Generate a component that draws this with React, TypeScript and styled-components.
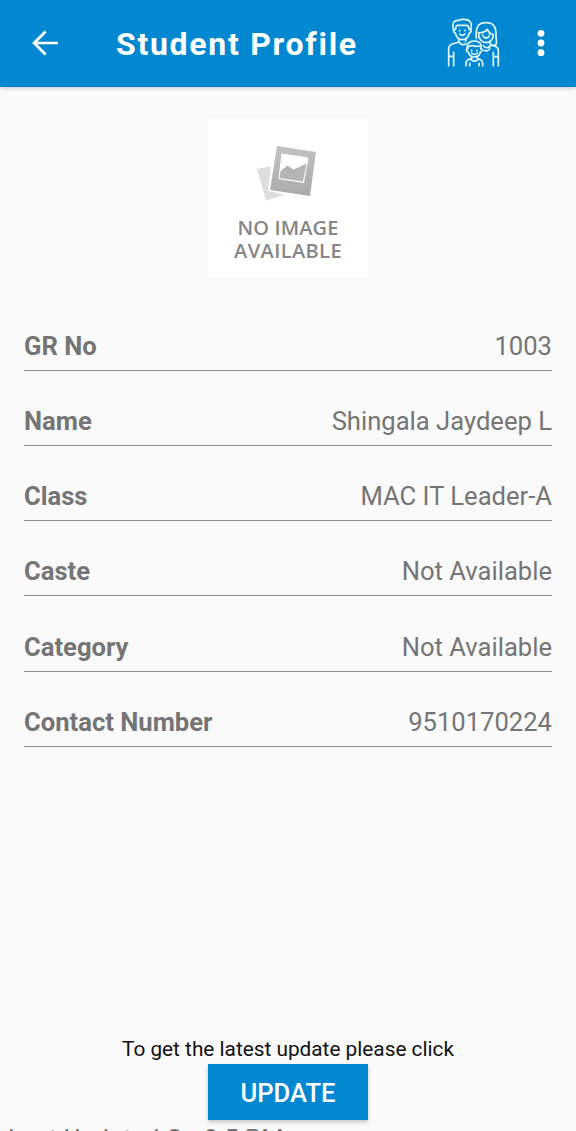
import React from "react";
import styled, { createGlobalStyle } from "styled-components";

const GlobalStyle = createGlobalStyle`
  *, *::before, *::after { box-sizing: border-box; }
  body { margin: 0; background: #fafafa; font-family: Roboto, "Liberation Sans", sans-serif; }
`;

const Screen = styled.div`
  display: flex;
  flex-direction: column;
  width: 576px;
  height: 1131px;
  overflow: hidden;
  background: #fafafa;
`;

const AppBar = styled.header`
  display: flex;
  flex: none;
  align-items: center;
  height: 87px;
  padding: 0 31px 2px 32px;
  background: #0288d1;
  color: #fff;
  box-shadow: 0 1px 4px rgba(0, 0, 0, 0.22);
`;

const Title = styled.h1`
  flex: 1;
  margin: 2px 0 0 58px;
  font-size: 32px;
  line-height: 40px;
  font-weight: 700;
  letter-spacing: 1.72px;
  white-space: nowrap;
`;

const IconButton = styled.button<{ $gap?: number }>`
  display: flex;
  flex: none;
  margin: 0 0 0 ${(p) => p.$gap ?? 0}px;
  padding: 0;
  border: 0;
  background: none;
  color: inherit;
`;

const Photo = styled.figure`
  display: flex;
  flex: none;
  flex-direction: column;
  align-items: center;
  align-self: center;
  width: 160px;
  height: 158px;
  margin: 32px 0 0;
  padding-top: 27px;
  background: #fff;
`;

const PhotoCaption = styled.figcaption`
  margin-top: 13px;
  color: #868686;
  font-family: "Open Sans", "Noto Sans", sans-serif;
  font-size: 20px;
  line-height: 22.5px;
  font-weight: 600;
  text-align: center;
  white-space: nowrap;
`;

const CaptionLine = styled.span<{ $spacing: number }>`
  display: block;
  letter-spacing: ${(p) => p.$spacing}px;
`;

const Details = styled.dl`
  flex: none;
  margin: 18.6px 24px 0;
`;

const DetailRow = styled.div`
  display: flex;
  align-items: flex-end;
  justify-content: space-between;
  height: 75.2px;
  padding-bottom: 9px;
  border-bottom: 1px solid #8c8c8c;
  color: #757575;
  font-size: 25.6px;
  line-height: 30px;
`;

const Label = styled.dt`
  font-weight: 700;
`;

const Value = styled.dd`
  margin: 0;
`;

const Footer = styled.footer`
  display: flex;
  flex-direction: column;
  align-items: center;
  margin-top: auto;
  height: 96px;
  flex: none;
`;

const Hint = styled.p`
  margin: 0;
  color: #111;
  font-size: 20.8px;
  line-height: 29px;
`;

const UpdateButton = styled.button`
  flex: none;
  width: 160px;
  height: 56px;
  padding: 2px 0 0;
  border: 0;
  background: #0288d1;
  color: #fff;
  font-family: inherit;
  font-size: 25.6px;
  font-weight: 500;
  box-shadow: 0 2px 4px rgba(0, 0, 0, 0.22);
`;

const LastUpdated = styled.p`
  align-self: flex-start;
  margin: 4px 0 0 8px;
  color: #757575;
  font-size: 25.6px;
  line-height: 30px;
  white-space: nowrap;
`;

const BackIcon = () => (
  <svg width="26" height="26" viewBox="0 0 26 26" fill="none" stroke="currentColor" strokeWidth="2.7">
    <path d="M26 13H2.2M13.6 1.5 2.1 13l11.5 11.5" />
  </svg>
);

const MoreIcon = () => (
  <svg width="8" height="28" viewBox="0 0 8 28" fill="currentColor">
    <circle cx="4" cy="4.3" r="3.4" />
    <circle cx="4" cy="14" r="3.4" />
    <circle cx="4" cy="23.7" r="3.4" />
  </svg>
);

const FamilyIcon = () => (
  <svg
    width="58"
    height="56"
    viewBox="0 0 174 168"
    fill="none"
    stroke="#e2f8ff"
    strokeWidth="5"
    strokeLinecap="round"
    strokeLinejoin="round"
  >
    {/* father */}
    <path d="M27 48C20 28 24 15 41 16C46 12 68 12 73 18C80 22 80 34 77 48" />
    <path d="M31 54C23 52 24 43 31 43C33 38 32 33 37 31H63C70 30 71 35 72 43C80 43 80 52 73 54C70 68 62 74 52 74S34 68 31 54Z" />
    <path d="M44 57Q52 65 60 57M44 46v1M60 46v1" />
    <path d="M42 73V81L22 87Q11 91 11 103V152M26 152V112M11 124H25M42 81Q51 94 62 86M62 73V79" />
    {/* mother */}
    <path d="M94 70C91 37 99 23 123 23C148 23 154 38 153 63C153 77 158 85 151 91H137" />
    <path d="M101 59C101 72 111 83 123 83S145 73 145 59C135 57 130 50 127 43C122 50 112 54 101 53Z" />
    <path d="M115 65Q123 73 132 65M113 59v1M133 59v1" />
    <path d="M136 81V89L151 94Q160 98 160 107V152M145 152V112M145 125H159M115 92Q126 105 137 91M117 106Q129 112 135 99" />
    {/* child */}
    <path fill="#0288d1" d="M67 101C64 87 72 78 88 78S111 87 108 101M66 98Q78 88 91 94L108 93" />
    <path d="M69 101C62 101 63 111 70 111C73 121 79 126 88 126S104 121 106 111C113 111 113 101 107 101" />
    <path d="M80 114Q88 123 97 114M80 106v1M96 106v1" />
    <path d="M80 126V131L69 134Q63 137 63 144V152M113 152V144Q113 137 107 134L97 131V126M77 133Q88 144 100 133M74 152V145M102 152V145" />
  </svg>
);

const PhotosGlyph = () => (
  <svg width="62" height="58" viewBox="0 0 62 58">
    <defs>
      <linearGradient id="frame" x1="0" y1="0" x2="0" y2="1">
        <stop offset="0" stopColor="#c2c2c2" />
        <stop offset="1" stopColor="#ababab" />
      </linearGradient>
    </defs>
    <path d="M0 23 14 20 11 44.500 28 49 9 54.500Z" fill="#dedede" />
    <path d="M20 0 59 6 53 50 13 44Z" fill="url(#frame)" />
    <path d="M24.500 7.500 51.500 11.500 47 37 21.500 33Z" fill="#fff" />
    <path d="M23.500 25 30.500 19.500 36.500 23.500 49.500 17.500 46 35.500 22.500 32Z" fill="#b5b5b5" />
  </svg>
);

const details = [
  { label: "GR No", value: "1003" },
  { label: "Name", value: "Shingala Jaydeep L" },
  { label: "Class", value: "MAC IT Leader-A" },
  { label: "Caste", value: "Not Available" },
  { label: "Category", value: "Not Available" },
  { label: "Contact Number", value: "9510170224" },
];

export default function App() {
  return (
    <Screen>
      <GlobalStyle />
      <AppBar>
        <IconButton aria-label="Back">
          <BackIcon />
        </IconButton>
        <Title>Student Profile</Title>
        <IconButton aria-label="Family">
          <FamilyIcon />
        </IconButton>
        <IconButton aria-label="More options" $gap={34}>
          <MoreIcon />
        </IconButton>
      </AppBar>
      <Photo>
        <PhotosGlyph />
        <PhotoCaption>
          <CaptionLine $spacing={0.1}>NO IMAGE</CaptionLine>
          <CaptionLine $spacing={0.4}>AVAILABLE</CaptionLine>
        </PhotoCaption>
      </Photo>
      <Details>
        {details.map((d) => (
          <DetailRow key={d.label}>
            <Label>{d.label}</Label>
            <Value>{d.value}</Value>
          </DetailRow>
        ))}
      </Details>
      <Footer>
        <Hint>To get the latest update please click</Hint>
        <UpdateButton>UPDATE</UpdateButton>
        <LastUpdated>Last Updated On 3:5 PM</LastUpdated>
      </Footer>
    </Screen>
  );
}
